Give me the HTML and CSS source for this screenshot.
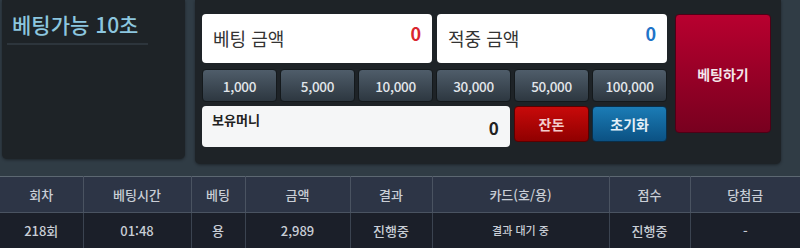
FILE: index.html
```html
<!DOCTYPE html>
<html lang="ko">
<head>
<meta charset="utf-8">
<link rel="stylesheet" href="styles.css">
</head>
<body>
<div class="top">
  <div class="left">
    <div class="timer">베팅가능 10초</div>
    <div class="divider"></div>
  </div>
  <div class="main">
    <div class="grid">
      <div class="row amounts">
        <div class="amount"><span class="label">베팅 금액</span><span class="val red">0</span></div>
        <div class="amount"><span class="label">적중 금액</span><span class="val blue">0</span></div>
      </div>
      <div class="row chips">
        <button class="chip">1,000</button>
        <button class="chip">5,000</button>
        <button class="chip">10,000</button>
        <button class="chip">30,000</button>
        <button class="chip">50,000</button>
        <button class="chip">100,000</button>
      </div>
      <div class="row bottom">
        <div class="balance"><span class="blabel">보유머니</span><span class="bval">0</span></div>
        <button class="act change">잔돈</button>
        <button class="act reset">초기화</button>
      </div>
    </div>
    <button class="bet">베팅하기</button>
  </div>
</div>
<table class="hist">
  <colgroup>
    <col class="c1"><col class="c2"><col class="c3"><col class="c4"><col class="c5"><col class="c6"><col class="c7"><col class="c8">
  </colgroup>
  <thead>
    <tr><th>회차</th><th>베팅시간</th><th>베팅</th><th>금액</th><th>결과</th><th>카드(호/용)</th><th>점수</th><th>당첨금</th></tr>
  </thead>
  <tbody>
    <tr><td>218회</td><td>01:48</td><td>용</td><td>2,989</td><td>진행중</td><td class="small">결과 대기 중</td><td>진행중</td><td>-</td></tr>
  </tbody>
</table>
</body>
</html>
```

FILE: styles.css
```css
* { box-sizing: border-box; }
html, body { margin: 0; padding: 0; }
body {
  width: 800px;
  height: 248px;
  overflow: hidden;
  background: #303c45;
  font-family: "Noto Sans CJK KR", "Noto Sans", sans-serif;
}
.top {
  display: flex;
  gap: 10px;
  padding-left: 2px;
  height: 176px;
}
.left {
  width: 183px;
  height: 159px;
  background: #1e2327;
  border-radius: 0 0 5px 5px;
  box-shadow: 0 1px 3px rgba(0,0,0,0.4);
  padding: 10px 0 0 5px;
}
.timer {
  color: #8cc6df;
  font-size: 21px;
  font-weight: 500;
  line-height: 28px;
  padding-left: 5px;
}
.divider {
  width: 141px;
  height: 2px;
  background: #2d353c;
  margin-top: 5px;
}
.main {
  width: 586px;
  height: 164px;
  background: #1e2327;
  border-radius: 0 0 5px 5px;
  box-shadow: 0 1px 3px rgba(0,0,0,0.4);
  padding: 14px 0 0 7px;
  display: flex;
  align-items: flex-start;
}
.grid {
  width: 465px;
  display: flex;
  flex-direction: column;
}
.row { display: flex; }
.amounts { gap: 5px; }
.amount {
  width: 230px;
  height: 49px;
  background: #fff;
  border-radius: 4px;
  display: flex;
  align-items: center;
  justify-content: space-between;
  padding: 0 11px 2px 11px;
}
.label {
  font-size: 18px;
  color: #333;
}
.val {
  font-size: 18px;
  font-weight: bold;
  margin-top: -10px;
}
.red { color: #d9262e; }
.blue { color: #1f74c8; }
.chips {
  gap: 3px;
  margin-top: 6px;
}
.chip {
  width: 75px;
  height: 33px;
  border: 1px solid #14191c;
  border-radius: 4px;
  background: linear-gradient(#4f5d6a, #2d3740);
  color: #e2e6ea;
  font-family: inherit;
  font-size: 13.5px;
  font-weight: 500;
  padding: 0;
  letter-spacing: -0.3px;
}
.bottom {
  margin-top: 4px;
  gap: 3px;
  align-items: flex-start;
}
.balance {
  width: 309px;
  height: 41px;
  background: #f5f6f7;
  border-radius: 4px;
  display: flex;
  justify-content: space-between;
  padding: 4px 11px 0 10px;
  margin-right: 1px;
}
.blabel {
  font-size: 13px;
  font-weight: bold;
  color: #222;
  line-height: 20px;
}
.bval {
  font-size: 17px;
  font-weight: bold;
  color: #222;
  margin-top: 6px;
  line-height: 24px;
}
.act {
  height: 36px;
  border-radius: 4px;
  font-family: inherit;
  font-size: 14px;
  font-weight: bold;
  padding: 0;
}
.change {
  width: 76px;
  border: 1px solid #5a0000;
  background: linear-gradient(#c80a0a, #900000);
  color: #f3cccc;
}
.reset {
  width: 75px;
  border: 1px solid #0a2e48;
  background: linear-gradient(#1b7cb6, #0b5183);
  color: #e4f0f8;
}
.bet {
  width: 96px;
  height: 119px;
  margin-left: 8px;
  border: 1px solid #4e0016;
  border-radius: 4px;
  background: linear-gradient(#b8002f, #78001f);
  color: #f4e6ea;
  font-family: inherit;
  font-size: 14px;
  font-weight: bold;
  padding: 0;
}
.hist {
  width: 800px;
  border-collapse: collapse;
  table-layout: fixed;
  border-top: 1px solid #5d6872;
}
.c1 { width: 83px; }
.c2 { width: 108px; }
.c3 { width: 54px; }
.c4 { width: 105px; }
.c5 { width: 82px; }
.c6 { width: 177px; }
.c7 { width: 81px; }
.c8 { width: 110px; }
.hist th {
  height: 36px;
  background: #2d3546;
  color: #c9ced6;
  font-size: 13px;
  font-weight: 500;
  border-left: 1px solid #4a5361;
  border-bottom: 1px solid #4a5361;
  padding: 0;
}
.hist td {
  height: 35px;
  background: #1b1f29;
  color: #c9ced6;
  font-size: 13px;
  font-weight: 500;
  text-align: center;
  border-left: 1px solid #3b4350;
  padding: 0;
}
.hist th:first-child, .hist td:first-child { border-left: none; }
.hist td.small { font-size: 11px; }
```
